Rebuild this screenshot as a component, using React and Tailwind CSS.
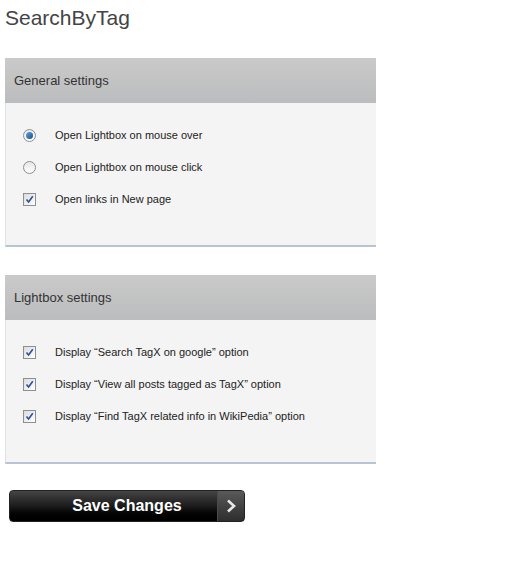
import React from 'react'

const Radio = ({ checked }) => (
  <span className="w-[13px] h-[13px] rounded-full border border-[#8e8f8f] bg-gradient-to-b from-[#e6e6e6] to-[#ffffff] flex items-center justify-center">
    {checked && <span className="w-[7px] h-[7px] rounded-full bg-gradient-to-br from-[#5fa9e6] to-[#0e4f8a]" />}
  </span>
)

const Check = () => (
  <span className="w-[13px] h-[13px] border border-[#8e8f8f] bg-gradient-to-br from-[#dcdcdc] to-[#ffffff] flex items-center justify-center">
    <svg width="9" height="9" viewBox="0 0 9 9">
      <path d="M1.5 4.5 L3.6 7 L7.8 1.2" fill="none" stroke="#2a4f9e" strokeWidth="1.6" />
    </svg>
  </span>
)

const Row = ({ control, label }) => (
  <div className="flex items-center h-[32px]">
    <div className="w-[49px] pl-[17px] flex items-center">{control}</div>
    <span className="text-[11px] text-[#222]">{label}</span>
  </div>
)

const Panel = ({ title, children }) => (
  <div className="w-[371px] ml-[5px]">
    <div className="h-[45px] bg-gradient-to-b from-[#cacaca] to-[#bbbcbd] flex items-center pl-[9px]">
      <span className="text-[13px] text-[#333]">{title}</span>
    </div>
    <div className="bg-[#f4f4f4] border-l border-[#dde2e8] border-b-2 border-b-[#b9c4d2] pt-[16px] pb-[30px]">
      {children}
    </div>
  </div>
)

const App = () => {
  return (
    <div className="min-h-screen bg-white" style={{ fontFamily: '"Liberation Sans", Arial, sans-serif' }}>
      <h1 className="text-[21px] text-[#444] pl-[5px] pt-[5px] leading-[26px]">SearchByTag</h1>

      <div className="mt-[27px]">
        <Panel title="General settings">
          <Row control={<Radio checked />} label="Open Lightbox on mouse over" />
          <Row control={<Radio />} label="Open Lightbox on mouse click" />
          <Row control={<Check />} label="Open links in New page" />
        </Panel>
      </div>

      <div className="mt-[28px]">
        <Panel title="Lightbox settings">
          <Row control={<Check />} label={'Display “Search TagX on google” option'} />
          <Row control={<Check />} label={'Display “View all posts tagged as TagX” option'} />
          <Row control={<Check />} label={'Display “Find TagX related info in WikiPedia” option'} />
        </Panel>
      </div>

      <div className="mt-[26px] ml-[9px] w-[236px] h-[32px] rounded-[4px] bg-gradient-to-b from-[#454545] via-[#1c1c1c] to-[#000] border border-[#222] flex overflow-hidden">
        <div className="flex-1 pl-[27px] flex items-center justify-center text-white font-bold text-[16px]">Save Changes</div>
        <div className="w-[27px] bg-gradient-to-b from-[#5a5a5a] to-[#2e2e2e] border-l border-[#4a4a4a] flex items-center justify-center">
          <svg width="12" height="14" viewBox="0 0 12 14">
            <path d="M3 1.5 L9 7 L3 12.5" fill="none" stroke="#e8e8e8" strokeWidth="2.6" />
          </svg>
        </div>
      </div>
    </div>
  )
}

export default App
